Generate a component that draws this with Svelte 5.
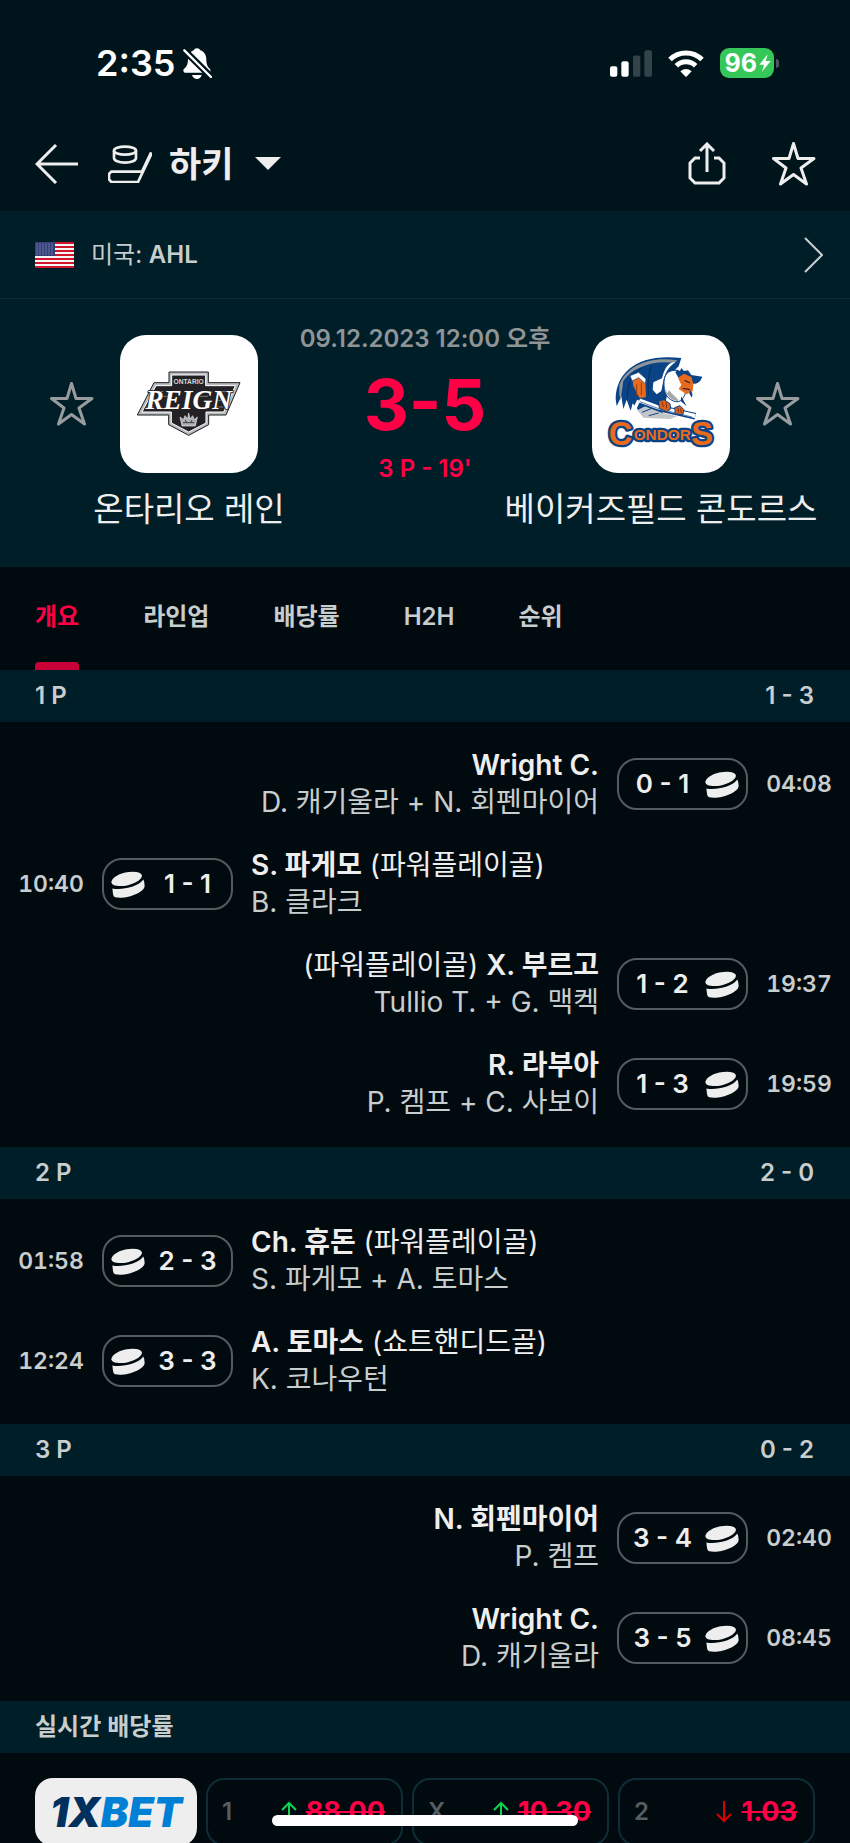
<script>
    const tabs = ['개요', '라인업', '배당률', 'H2H', '순위'];
    let activeTab = '개요';

    const periods = [
        {
            name: '1 P',
            score: '1 - 3',
            goals: [
                { side: 'away', time: '04:08', score: '0 - 1', scorer: 'Wright C.', assists: 'D. 캐기울라 + N. 회펜마이어' },
                { side: 'home', time: '10:40', score: '1 - 1', scorer: 'S. 파게모', note: '(파워플레이골)', assists: 'B. 클라크' },
                { side: 'away', time: '19:37', score: '1 - 2', scorer: 'X. 부르고', note: '(파워플레이골)', assists: 'Tullio T. + G. 맥켁' },
                { side: 'away', time: '19:59', score: '1 - 3', scorer: 'R. 라부아', assists: 'P. 켐프 + C. 사보이' }
            ]
        },
        {
            name: '2 P',
            score: '2 - 0',
            goals: [
                { side: 'home', time: '01:58', score: '2 - 3', scorer: 'Ch. 휴돈', note: '(파워플레이골)', assists: 'S. 파게모 + A. 토마스' },
                { side: 'home', time: '12:24', score: '3 - 3', scorer: 'A. 토마스', note: '(쇼트핸디드골)', assists: 'K. 코나우턴' }
            ]
        },
        {
            name: '3 P',
            score: '0 - 2',
            goals: [
                { side: 'away', time: '02:40', score: '3 - 4', scorer: 'N. 회펜마이어', assists: 'P. 켐프' },
                { side: 'away', time: '08:45', score: '3 - 5', scorer: 'Wright C.', assists: 'D. 캐기울라' }
            ]
        }
    ];

    const odds = [
        { label: '1', value: '88.00', up: true },
        { label: 'X', value: '10.30', up: true },
        { label: '2', value: '1.03', up: false }
    ];

    // US flag
    const stripes = [0, 4, 8, 12, 16, 20, 24];
    const starRows = [2, 4, 6, 8, 10, 12];
    const starCols = [2, 5, 8, 11, 14, 17];
</script>

{#snippet star()}
    <svg class="star" viewBox="0 0 44 44" aria-hidden="true">
        <path d="M21.5 1.5 26 16.5h16L29 26l5.5 16L21.5 32.5 8.5 42 14 26 1.5 16.5h15.5z" />
    </svg>
{/snippet}

{#snippet puck()}
    <svg class="puck" viewBox="0 0 100 79" aria-hidden="true">
        <ellipse cx="46" cy="23" rx="46" ry="19" transform="rotate(-13 46 23)" />
        <path d="M4 51C30 57 82 46 95 25Q99 32 99 44C98 64 44 84 12 77Q7 75 6 68Z" />
    </svg>
{/snippet}

<div class="screen">
    <div class="status-bar">
        <span class="clock">2:35</span>
        <svg class="bell" viewBox="0 0 87 93" aria-hidden="true">
            <path d="M42 1c5 0 8 2 10 6 13 4 18 16 18 28 0 16 5 22 12 29v10H5q-6-3-3-10C14 54 14 48 15 34 16 20 21 11 32 7c2-4 5-6 10-6z" />
            <path d="M27 81h29c-2 8-8 12-14 12s-13-4-15-12z" />
            <path class="gap" d="M4 7 85 87" />
            <path class="slash" d="M4 7 84 87" />
        </svg>
        <svg class="signal" viewBox="0 0 126 80" aria-hidden="true">
            <rect y="48" width="22" height="32" rx="6" />
            <rect x="34" y="33" width="22" height="47" rx="6" />
            <rect class="dim" x="69" y="16" width="22" height="64" rx="6" />
            <rect class="dim" x="103" width="23" height="80" rx="6" />
        </svg>
        <svg class="wifi" viewBox="0 0 108 80" aria-hidden="true">
            <path class="arc" d="M6 28a68 68 0 0 1 96 0" />
            <path class="arc" d="M25 47a41 41 0 0 1 58 0" />
            <path d="M37 63q17-13 34 0L56 79q-2 2-4 0z" />
        </svg>
        <div class="battery">
            <div class="battery-body">
                <span>96</span>
                <svg viewBox="0 0 36 54" aria-hidden="true"><path d="M26 1 1 32h14L9 53 35 21H20z" /></svg>
            </div>
            <div class="battery-tip"></div>
        </div>
    </div>

    <header class="nav">
        <button class="icon-btn back" aria-label="뒤로">
            <svg viewBox="0 0 44 40" aria-hidden="true"><path d="M43 20H2M21 1 2 20l19 19" /></svg>
        </button>
        <button class="sport">
            <svg class="hockey" viewBox="0 0 132 114" aria-hidden="true">
                <ellipse cx="51" cy="17" rx="33" ry="12" />
                <path d="M18 17v22c0 8 14 14 33 14s33-6 33-14V17" />
                <path d="M102 80H10l-7 7v16l7 8h80L129 29v-6L102 80z" />
            </svg>
            <span>하키</span>
            <svg class="caret" viewBox="0 0 26 13" aria-hidden="true"><path d="M0 0h26L13 13z" /></svg>
        </button>
        <button class="icon-btn share" aria-label="공유">
            <svg viewBox="0 0 38 43" aria-hidden="true">
                <path d="M12 16H7l-5 5v15l5 5h24l5-5V21l-5-5h-5M19 30V2M12 9l7-7 7 7" />
            </svg>
        </button>
        <button class="icon-btn favorite" aria-label="즐겨찾기">{@render star()}</button>
    </header>

    <main>
        <a class="league" href="#league">
            <svg class="flag" viewBox="0 0 39 26" aria-hidden="true">
                <rect width="39" height="26" fill="#f5f5f5" />
                {#each stripes as y}
                    <rect {y} width="39" height="2" fill="#d0142c" />
                {/each}
                <rect width="20" height="14" fill="#343f78" />
                {#each starRows as cy}
                    {#each starCols as cx}
                        <circle {cx} {cy} r="0.5" fill="#b9bed6" />
                    {/each}
                {/each}
            </svg>
            <span>미국: <b>AHL</b></span>
            <svg class="chevron" viewBox="0 0 20 36" aria-hidden="true"><path d="M2 1 19 18 2 35" /></svg>
        </a>

        <section class="match">
            <button class="icon-btn team-star" aria-label="온타리오 레인 즐겨찾기">{@render star()}</button>
            <div class="team">
                <div class="crest">
                    <svg viewBox="0 0 414 414" aria-hidden="true">
                        <path d="M147 111H265V143H360L318 240H266V269L206 301 146 269V240H52L102 143H147Z" fill="#b9bdc0" stroke="#1d1c1e" stroke-width="3" />
                        <path d="M155 120H257V152H346L311 231H258V264L206 291 154 264V231H66L108 152H155Z" fill="#232124" stroke="#fff" stroke-width="3" />
                        <path d="M100 170h30M86 196h26M78 216h24M290 170h40M288 196h32M284 216h26M130 184h16M240 184h24" stroke="#777b80" stroke-width="3" />
                        <text x="206" y="147" font-family="Liberation Sans, sans-serif" font-size="20" font-weight="700" text-anchor="middle" fill="#d4d6d8">ONTARIO</text>
                        <text x="206" y="222" font-family="Liberation Serif, serif" font-size="82" font-weight="700" font-style="italic" text-anchor="middle" fill="#fff" stroke="#232124" stroke-width="5" paint-order="stroke">REIGN</text>
                        <path d="M186 273 180 246l10 8 5-12 8 10 3-18 4 18 8-10 5 12 9-8-6 27z" fill="#aeb2b5" stroke="#e8e8e8" stroke-width="2" />
                        <path d="M189 263h34M196 255l4 8M216 255l-4 8" stroke="#3b393c" stroke-width="3" />
                    </svg>
                </div>
                <h2>온타리오 레인</h2>
            </div>
            <div class="result">
                <time datetime="2023-12-09T12:00">09.12.2023 12:00 오후</time>
                <strong class="score">3-5</strong>
                <span class="stage">3 P - 19'</span>
            </div>
            <div class="team">
                <div class="crest">
                    <svg viewBox="6 0 414 414" aria-hidden="true">
                        <!-- wing -->
                        <path d="M77 192C78 110 145 54 274 69L266 94 250 110 238 150 226 204 216 240 150 232 128 205 122 228 110 194 100 222 94 184 80 214Z" fill="#0b4387" />
                        <path d="M88 150C110 92 180 62 262 76L254 84C190 74 126 98 100 138L92 196 88 180Z" fill="#8d949a" />
                        <path d="M136 110C120 130 112 160 112 190M152 100 142 112M186 92C176 110 172 140 176 180" fill="none" stroke="#06305f" stroke-width="3" />
                        <path d="M256 82C238 80 224 96 216 130L190 142 188 164 200 178 214 168 218 148C224 114 234 98 256 82Z" fill="#fff" />
                        <!-- head -->
                        <path d="M262 106C232 104 220 120 222 152 222 184 244 202 266 200 282 194 290 172 286 154L272 136Z" fill="#fff" stroke="#0b4387" stroke-width="3" />
                        <path d="M224 158C228 184 248 198 266 198 258 184 250 184 238 166L232 174Z" fill="#a4a7aa" />
                        <path d="M256 112 262 104 270 108 274 99 282 108 294 106 304 120 337 125C330 144 318 148 306 146L296 136 266 130Z" fill="#0b4387" />
                        <path d="M264 128 282 116 304 126 310 146 308 168 290 178 266 162 274 150Z" fill="#e86b1d" />
                        <path d="M284 136 300 144M278 160 300 164" fill="none" stroke="#3a2430" stroke-width="4" />
                        <path d="M300 166q10 6 6 22l-8-12zM274 184l16 30-18-16z" fill="#0b4387" />
                        <!-- sleeve, gloves and stick -->
                        <path d="M124 122 146 112 168 134 170 188 148 192 128 154Z" fill="#e86b1d" stroke="#0b4387" stroke-width="4" />
                        <path d="M120 122 146 112 168 132 166 146 146 128 126 138Z" fill="#fff" stroke="#0b4387" stroke-width="2" />
                        <path d="M140 148v34M154 142v38" stroke="#8c3d17" stroke-width="3" />
                        <path d="M142 226 172 210 210 232 262 244 240 252 160 248Z" fill="#c3c6c8" />
                        <path d="M156 232 186 220M176 242 206 234" stroke="#0b4387" stroke-width="3" />
                        <path d="M146 196 202 218 316 244" fill="none" stroke="#0b4387" stroke-width="20" />
                        <path d="M148 196 204 217 316 243" fill="none" stroke="#fff" stroke-width="12" />
                        <path d="M150 200 206 221 306 246" fill="none" stroke="#0b4387" stroke-width="2" />
                        <path d="M146 196 134 222 112 240" fill="none" stroke="#fff" stroke-width="10" />
                        <path d="M206 198 222 194 240 206 242 222 230 230 208 220ZM254 218 270 212 282 224 278 240 256 236Z" fill="#d8621e" stroke="#0b4387" stroke-width="3" />
                        <path d="M216 200l4 16M228 202l2 18M264 218l2 14M272 220l2 14" stroke="#7c3413" stroke-width="3" />
                        <!-- wordmark -->
                        <text class="wordmark" y="330">
                            <tspan class="cap" x="56">C</tspan><tspan x="131" dy="-14">ONDOR</tspan><tspan class="cap" x="304" dy="14">S</tspan>
                        </text>
                    </svg>
                </div>
                <h2>베이커즈필드 콘도르스</h2>
            </div>
            <button class="icon-btn team-star" aria-label="베이커즈필드 콘도르스 즐겨찾기">{@render star()}</button>
        </section>

        <nav class="tabs">
            {#each tabs as tab}
                <button class:active={tab === activeTab} on:click={() => (activeTab = tab)}>{tab}</button>
            {/each}
        </nav>

        {#each periods as period}
            <h3 class="section-title">
                <span>{period.name}</span>
                <span>{period.score}</span>
            </h3>
            <ul class="goals">
                {#each period.goals as goal}
                    <li class={goal.side}>
                        <time>{goal.time}</time>
                        <div class="pill">
                            {@render puck()}
                            <span>{goal.score}</span>
                        </div>
                        <div class="players">
                            <p class="scorer">
                                {#if goal.note && goal.side === 'away'}{goal.note}{/if}
                                <b>{goal.scorer}</b>
                                {#if goal.note && goal.side === 'home'}{goal.note}{/if}
                            </p>
                            <p class="assists">{goal.assists}</p>
                        </div>
                    </li>
                {/each}
            </ul>
        {/each}

        <h3 class="section-title"><span>실시간 배당률</span></h3>
        <div class="odds">
            <a class="bookmaker" href="#bookmaker"><span>1X</span>BET</a>
            {#each odds as odd}
                <button class="odd">
                    <span class="odd-label">{odd.label}</span>
                    <svg class:up={odd.up} viewBox="0 0 16 22" aria-hidden="true"><path d="M8 0v20M1 13l7 7 7-7" /></svg>
                    <s>{odd.value}</s>
                </button>
            {/each}
        </div>
    </main>

    <div class="home-indicator"></div>
</div>

<style>
    :global(body) {
        margin: 0;
        background: #010a0f;
    }

    .screen {
        display: flex;
        flex-direction: column;
        height: 100vh;
        overflow: hidden;
        background: #00141b;
        color: #eeeeee;
        font-family: Inter, 'Noto Sans CJK KR', sans-serif;
        font-size: 24px;
        line-height: 28px;
    }

    svg {
        display: block;
        flex: none;
        fill: currentColor;
    }

    button {
        padding: 0;
        border: 0;
        background: none;
        color: inherit;
        font: inherit;
        cursor: pointer;
    }

    a {
        color: inherit;
        text-decoration: none;
    }

    h2,
    h3,
    p,
    ul {
        margin: 0;
        padding: 0;
        font-weight: 400;
        list-style: none;
    }

    .status-bar {
        display: flex;
        flex: none;
        align-items: center;
        height: 106px;
        padding: 10px 71px 0 96px;
        color: #ffffff;
    }

    .clock {
        font-size: 36px;
        font-weight: 600;
    }

    .bell {
        width: 29px;
        height: 31px;
        margin-left: 8px;
    }

    .bell .gap {
        stroke: #00141b;
        stroke-width: 20;
    }

    .bell .slash {
        stroke: currentColor;
        stroke-width: 7;
        stroke-linecap: round;
    }

    .signal {
        width: 42px;
        height: 27px;
        margin-left: auto;
    }

    .signal .dim {
        fill: #33434a;
    }

    .wifi {
        width: 36px;
        height: 27px;
        margin: 0 16px;
    }

    .wifi .arc {
        fill: none;
        stroke: currentColor;
        stroke-width: 15;
    }

    .battery {
        display: flex;
        align-items: center;
        gap: 2px;
    }

    .battery-body {
        display: flex;
        align-items: center;
        gap: 2px;
        height: 30px;
        padding: 0 3px 0 5px;
        border-radius: 9px;
        background: #35c759;
        font-size: 25px;
        font-weight: 700;
    }

    .battery-body svg {
        width: 12px;
        height: 18px;
    }

    .battery-tip {
        width: 3px;
        height: 9px;
        border-radius: 0 4px 4px 0;
        background: #4a575c;
    }

    .nav {
        display: flex;
        flex: none;
        align-items: center;
        height: 95px;
        padding: 0 34px 0 35px;
    }

    .icon-btn svg {
        fill: none;
        stroke: currentColor;
        stroke-width: 3;
    }

    .back svg {
        width: 44px;
        height: 40px;
    }

    .sport {
        display: flex;
        align-items: center;
        gap: 17px;
        margin: 0 auto 0 29px;
        font-size: 35px;
        font-weight: 700;
        line-height: 44px;
    }

    .hockey {
        width: 44px;
        height: 38px;
        fill: none;
        stroke: currentColor;
        stroke-width: 8;
    }

    .caret {
        width: 26px;
        height: 13px;
        margin-left: 5px;
    }

    .share svg {
        width: 38px;
        height: 43px;
    }

    .favorite {
        margin-left: 46px;
    }

    .icon-btn .star {
        width: 44px;
        height: 44px;
        stroke-linejoin: round;
    }

    main {
        flex: 1;
        min-height: 0;
        overflow-y: auto;
        scrollbar-width: none;
        background: #010a0f;
    }

    .league {
        display: flex;
        align-items: center;
        gap: 17px;
        height: 87px;
        padding: 0 27px 0 35px;
        border-bottom: 1px solid #0f2d37;
        background: #001e28;
        color: #c8cdcd;
    }

    .league b {
        font-weight: 600;
    }

    .flag {
        width: 39px;
        height: 26px;
    }

    .chevron {
        width: 20px;
        height: 36px;
        margin-left: auto;
        fill: none;
        stroke: currentColor;
        stroke-width: 2;
    }

    .match {
        display: flex;
        align-items: flex-start;
        gap: 26px;
        padding: 26px 50px 38px;
        background: #001e28;
    }

    .team-star {
        display: flex;
        align-items: center;
        height: 138px;
        margin-top: 10px;
        color: #999c9e;
    }

    .team {
        display: flex;
        flex: none;
        flex-direction: column;
        align-items: center;
        width: 138px;
        margin-top: 10px;
    }

    .crest {
        width: 138px;
        height: 138px;
        border-radius: 26px;
        background: #ffffff;
    }

    .crest svg {
        width: 138px;
        height: 138px;
    }

    .wordmark {
        fill: #e86b1d;
        stroke: #0b4387;
        stroke-width: 14;
        stroke-linejoin: round;
        paint-order: stroke;
        font-family: 'Liberation Sans', sans-serif;
        font-size: 46px;
        font-weight: 700;
    }

    .wordmark .cap {
        font-size: 98px;
    }

    .team h2 {
        margin-top: 16px;
        font-size: 33px;
        line-height: 40px;
        white-space: nowrap;
    }

    .result {
        display: flex;
        flex: 1;
        flex-direction: column;
        align-items: center;
        min-width: 0;
        font-weight: 600;
        white-space: nowrap;
    }

    .result time {
        color: #8f9496;
    }

    .score {
        margin: 16px 0 14px;
        color: #ff0046;
        font-size: 70px;
        font-weight: 700;
        line-height: 72px;
    }

    .stage {
        color: #ff0046;
    }

    .tabs {
        display: flex;
        gap: 64px;
        height: 103px;
        padding: 0 35px;
        color: #c8cdcd;
    }

    .tabs button {
        display: flex;
        flex-direction: column;
        padding-top: 36px;
        font-weight: 600;
    }

    .tabs .active {
        color: #ff0046;
    }

    .tabs .active::after {
        content: '';
        width: 100%;
        height: 8px;
        margin-top: auto;
        border-radius: 4px 4px 0 0;
        background: #c80037;
    }

    .section-title {
        display: flex;
        align-items: center;
        justify-content: space-between;
        height: 52px;
        padding: 0 36px 0 35px;
        background: #001e28;
        color: #c8cdcd;
        font-size: 24px;
        font-weight: 600;
    }

    .goals {
        padding: 12px 0 13px;
    }

    .goals li {
        display: flex;
        align-items: center;
        gap: 18px;
        height: 100px;
        padding: 0 18px;
    }

    .goals .away {
        flex-direction: row-reverse;
        text-align: right;
    }

    .goals time {
        flex: none;
        width: 66px;
        color: #c8cdcd;
        font-size: 23px;
        font-variant-numeric: tabular-nums;
        font-weight: 600;
        text-align: center;
    }

    .pill {
        display: flex;
        flex: none;
        align-items: center;
        gap: 6px;
        box-sizing: border-box;
        width: 131px;
        height: 52px;
        padding: 0 7px;
        border: 2px solid #555b5f;
        border-radius: 20px;
        font-size: 26px;
        font-weight: 600;
    }

    .away .pill {
        flex-direction: row-reverse;
    }

    .pill span {
        flex: 1;
        text-align: center;
        white-space: nowrap;
    }

    .puck {
        width: 34px;
        height: 27px;
    }

    .players {
        flex: 1;
        font-size: 28px;
        line-height: 37px;
    }

    .scorer b {
        font-weight: 600;
    }

    .assists {
        color: #c8cdcd;
    }

    .odds {
        display: grid;
        grid-template-columns: 162px repeat(3, 1fr);
        gap: 9px;
        padding: 25px 35px;
    }

    .bookmaker {
        display: flex;
        align-items: center;
        justify-content: center;
        height: 68px;
        border-radius: 18px;
        background: #eeeeee;
        color: #0080d4;
        font-size: 41px;
        font-style: italic;
        font-weight: 900;
    }

    .bookmaker span {
        color: #00305e;
    }

    .odd {
        display: flex;
        align-items: center;
        gap: 9px;
        height: 68px;
        padding: 0 16px 0 14px;
        border: 2px solid #0f2d37;
        border-radius: 18px;
        box-sizing: border-box;
    }

    .odd-label {
        margin-right: auto;
        color: #555e62;
        font-weight: 600;
    }

    .odd svg {
        width: 16px;
        height: 22px;
        fill: none;
        stroke: #dc0000;
        stroke-width: 2;
    }

    .odd .up {
        stroke: #0bd650;
        transform: rotate(180deg);
    }

    .odd s {
        color: #ff0046;
        font-size: 27px;
        font-weight: 700;
        text-decoration-thickness: 2px;
    }

    .home-indicator {
        position: fixed;
        bottom: 17px;
        left: 50%;
        width: 36%;
        height: 11px;
        border-radius: 6px;
        background: #ffffff;
        transform: translateX(-50%);
    }
</style>
